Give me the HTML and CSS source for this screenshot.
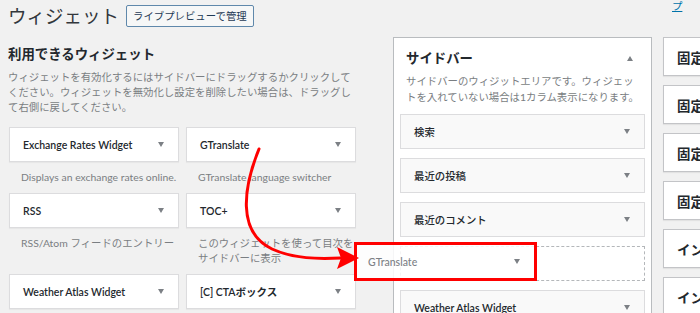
FILE: index.html
```html
<!DOCTYPE html>
<html lang="ja">
<head>
  <meta charset="UTF-8">
  <meta name="viewport" content="width=device-width, initial-scale=1.0">
  <title>ウィジェット</title>
  <link rel="stylesheet" href="styles.css">
</head>
<body>
  <a class="help-tab" href="#">ヘルプ</a>

  <div class="wrap">
    <div class="page-head">
      <h1>ウィジェット</h1>
      <a class="head-btn" href="#">ライブプレビューで管理</a>
    </div>

    <div class="columns">
      <!-- available widgets -->
      <div class="available">
        <h2>利用できるウィジェット</h2>
        <p class="intro">ウィジェットを有効化するにはサイドバーにドラッグするかクリックしてください。ウィジェットを無効化し設定を削除したい場合は、ドラッグして右側に戻してください。</p>

        <div class="widget-list">
          <div class="widget-item">
            <div class="widget-top"><span>Exchange Rates Widget</span><i class="arrow-down"></i></div>
            <p class="widget-desc">Displays an exchange rates online.</p>
          </div>
          <div class="widget-item">
            <div class="widget-top"><span>GTranslate</span><i class="arrow-down"></i></div>
            <p class="widget-desc">GTranslate language switcher</p>
          </div>
          <div class="widget-item">
            <div class="widget-top"><span>RSS</span><i class="arrow-down"></i></div>
            <p class="widget-desc">RSS/Atom フィードのエントリー</p>
          </div>
          <div class="widget-item">
            <div class="widget-top"><span>TOC+</span><i class="arrow-down"></i></div>
            <p class="widget-desc">このウィジェットを使って目次をサイドバーに表示</p>
          </div>
          <div class="widget-item">
            <div class="widget-top"><span>Weather Atlas Widget</span><i class="arrow-down"></i></div>
          </div>
          <div class="widget-item">
            <div class="widget-top"><span>[C] CTAボックス</span><i class="arrow-down"></i></div>
          </div>
        </div>
      </div>

      <!-- sidebar area -->
      <div class="sidebar-panel">
        <div class="sidebar-head">
          <h2>サイドバー</h2>
          <i class="arrow-up"></i>
        </div>
        <p class="sidebar-desc">サイドバーのウィジットエリアです。ウィジェットを入れていない場合は1カラム表示になります。</p>
        <div class="sb-widget"><span>検索</span><i class="arrow-down"></i></div>
        <div class="sb-widget"><span>最近の投稿</span><i class="arrow-down"></i></div>
        <div class="sb-widget"><span>最近のコメント</span><i class="arrow-down"></i></div>
        <div class="sb-placeholder"></div>
        <div class="sb-widget latin"><span>Weather Atlas Widget</span><i class="arrow-down"></i></div>
      </div>

      <!-- other areas, cut off -->
      <div class="more-areas">
        <div class="area-box">固定ページ上</div>
        <div class="area-box">固定ページ下</div>
        <div class="area-box">固定ページ横</div>
        <div class="area-box">固定ページ末</div>
        <div class="area-box">インデックス上</div>
        <div class="area-box">インデックス下</div>
      </div>
    </div>
  </div>

  <!-- dragged widget + annotation -->
  <div class="drag-helper">
    <span>GTranslate</span><i class="arrow-down"></i>
  </div>

  <svg class="drag-arrow" width="700" height="313" viewBox="0 0 700 313">
    <path d="M259 149 C244 186 236 232 272 249 C294 259 318 259 341 258" fill="none" stroke="#f00" stroke-width="3" stroke-linecap="round"/>
    <polygon points="337,247 359,258 337,269 341,258" fill="#f00"/>
  </svg>
</body>
</html>
```

FILE: styles.css
```css
html, body {
  margin: 0;
  padding: 0;
}
body {
  position: relative;
  width: 700px;
  height: 313px;
  overflow: hidden;
  background: #f1f1f1;
  color: #23282d;
  font-family: Lato, "Noto Sans CJK JP", sans-serif;
  font-size: 10.4px;
}
.wrap {
  padding: 0 8px;
}
.help-tab {
  position: absolute;
  top: -15px;
  left: 672px;
  color: #0073aa;
  font-size: 10.4px;
  line-height: 14px;
  text-decoration: underline;
}

/* page header */
.page-head {
  display: flex;
  align-items: center;
  gap: 7px;
  height: 31px;
}
.page-head h1 {
  margin: 0;
  font-size: 18.5px;
  font-weight: 400;
  line-height: 24px;
  color: #32373c;
}
.head-btn {
  display: flex;
  align-items: center;
  height: 20px;
  padding: 0 6px;
  border: 1px solid #5f88ab;
  border-radius: 2px;
  background: #f6f7f7;
  color: #1e3a55;
  font-size: 10.4px;
  text-decoration: none;
}

.columns {
  display: flex;
  align-items: flex-start;
  margin-top: 6px;
}

/* available widgets */
.available {
  width: 348px;
  flex: none;
  padding-top: 7px;
}
.available h2 {
  margin: 0;
  font-size: 13.4px;
  font-weight: 700;
  line-height: 20px;
}
.intro {
  margin: 6px 0 0;
  color: #7a7e82;
  line-height: 15px;
}
.widget-list {
  display: grid;
  grid-template-columns: 170px 170px;
  column-gap: 7px;
  margin: 12px 0 0 1px;
}
.widget-top {
  display: flex;
  align-items: center;
  justify-content: space-between;
  height: 33px;
  padding: 0 14px 0 13px;
  background: #fff;
  border: 1px solid #dcdcde;
  box-shadow: 0 1px 1px rgba(0,0,0,0.04);
  font-weight: 600;
  font-size: 10.5px;
}
.widget-desc {
  margin: 0;
  padding: 8px 0 8px 12px;
  color: #7a7e82;
  line-height: 15px;
}

/* small triangles */
.arrow-down,
.arrow-up {
  width: 0;
  height: 0;
  border-left: 3.5px solid transparent;
  border-right: 3.5px solid transparent;
}
.arrow-down {
  border-top: 5px solid #7c8085;
}
.arrow-up {
  border-bottom: 5px solid #7c8085;
}

/* sidebar */
.sidebar-panel {
  width: 245px;
  flex: none;
  margin-left: 37px;
  padding: 10px 6px 0;
  height: 300px;
  background: #fff;
  border: 1px solid #b9bcbf;
}
.sidebar-head {
  display: flex;
  align-items: center;
  justify-content: space-between;
  padding: 0 12px 0 6px;
}
.sidebar-head h2 {
  margin: 0;
  font-size: 13.4px;
  font-weight: 700;
  line-height: 20px;
}
.sidebar-desc {
  margin: 5px 0 0;
  padding: 0 6px;
  color: #7a7e82;
  line-height: 16px;
}
.sb-widget,
.sb-placeholder {
  height: 33px;
  margin-top: 9px;
}
.sb-widget {
  display: flex;
  align-items: center;
  justify-content: space-between;
  padding: 0 14px 0 13px;
  background: #f9f9f9;
  border: 1px solid #dcdcde;
  font-weight: 500;
}
.sb-widget.latin {
  font-weight: 600;
  font-size: 10.5px;
}
.sb-placeholder {
  border: 1px dashed #b4b7ba;
}

/* right column, mostly off screen */
.more-areas {
  display: flex;
  flex-direction: column;
  gap: 9px;
  margin-left: 11px;
  width: 120px;
  flex: none;
}
.area-box {
  display: flex;
  align-items: center;
  height: 37px;
  padding-left: 13px;
  background: #fff;
  border: 1px solid #c3c4c7;
  box-shadow: 0 1px 1px rgba(0,0,0,0.06);
  font-size: 13.4px;
  font-weight: 700;
  white-space: nowrap;
}

/* dragged helper with red frame */
.drag-helper {
  position: absolute;
  left: 354px;
  top: 242px;
  width: 166px;
  height: 33px;
  display: flex;
  align-items: center;
  justify-content: space-between;
  padding: 0 0 0 11px;
  box-sizing: content-box;
  border: 3px solid #f00;
  background: rgba(255,255,255,0.85);
  color: #7c8085;
  font-weight: 500;
  font-size: 10.5px;
}
.drag-helper i {
  margin-right: 14px;
}
.drag-arrow {
  position: absolute;
  left: 0;
  top: 0;
  pointer-events: none;
}
```
